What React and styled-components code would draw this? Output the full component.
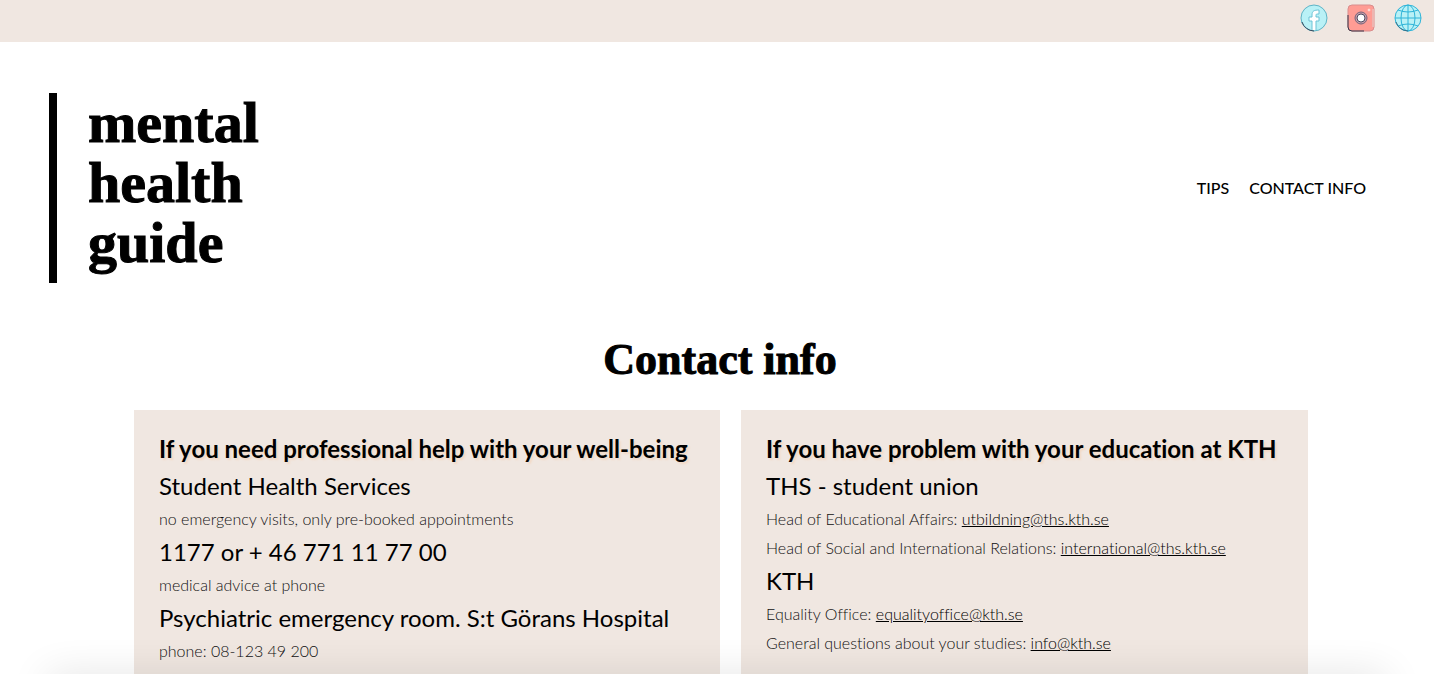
import React from 'react';
import styled, { createGlobalStyle } from 'styled-components';

const GlobalStyle = createGlobalStyle`
  *, *::before, *::after { box-sizing: border-box; }
  body {
    margin: 0;
    background: #fff;
    color: #000;
    font-family: Lato, "Liberation Sans", sans-serif;
    font-variant-ligatures: none;
  }
  h1, h2, h3, p { margin: 0; }
`;

const Page = styled.div`
  display: flex;
  flex-direction: column;
  min-height: 100vh;
`;

const SocialBar = styled.div`
  display: flex;
  justify-content: flex-end;
  gap: 19px;
  height: 42px;
  padding: 4px 12px;
  background: #f0e7e1;
`;

const SocialLink = styled.a`
  display: block;
  width: 28px;
  height: 28px;
  svg { display: block; width: 100%; height: 100%; }
`;

const Header = styled.header`
  display: flex;
  align-items: center;
  justify-content: space-between;
  padding: 51px 68px 0 49px;
`;

const Logo = styled.a`
  display: flex;
  flex-direction: column;
  padding: 0 0 10px 31px;
  border-left: 8px solid #000;
  color: #000;
  font: bold 58px/60px "Liberation Serif", serif;
  -webkit-text-stroke: 1px #000;
  text-decoration: none;
`;

const Nav = styled.nav`
  display: flex;
  gap: 20px;
`;

const NavLink = styled.a`
  color: #000;
  font-size: 16px;
  font-weight: 500;
  line-height: 24px;
  text-decoration: none;
`;

const Title = styled.h1`
  padding: 50px 0 24px 6px;
  font: bold 44px/53px "Liberation Serif", serif;
  -webkit-text-stroke: 1px #000;
  text-align: center;
`;

const Cards = styled.main`
  flex: 1;
  display: grid;
  grid-template-columns: 586fr 567fr;
  gap: 21px;
  padding: 0 126px 0 134px;
`;

const Card = styled.section`
  padding: 24px 25px 8px;
  background: #f0e7e1;
`;

const CardTitle = styled.h2`
  font-size: 24px;
  font-weight: 700;
  line-height: 29px;
  white-space: nowrap;
  text-shadow: 2px 2px 2px #f3d9c5;
`;

const Subject = styled.h3`
  padding-top: 8px;
  font-size: 24px;
  font-weight: 400;
  line-height: 29px;
`;

const Detail = styled.p`
  padding-top: 8px;
  color: #111;
  font-size: 16px;
  font-weight: 300;
  line-height: 21px;
`;

const MailLink = styled.a`
  color: #000;
`;

const BottomShade = styled.div`
  position: fixed;
  right: 48px;
  bottom: -24px;
  left: 48px;
  height: 20px;
  box-shadow: 0 0 40px rgba(0, 0, 0, 0.16);
  pointer-events: none;
`;

const FacebookIcon = () => (
  <svg viewBox="0 0 28 28" aria-hidden="true">
    <circle cx="14" cy="14" r="13" fill="#b9f1f6" stroke="#5fb4c6" />
    <path d="M2 18a13 13 0 0 0 12 9" fill="none" stroke="#38495c" />
    <path d="M12 26v-9H9v-4h3v-2c0-4 2-5 7-5v4c-3 0-3 0-3 2v1h3v4h-3v9" fill="#fff" stroke="#6cc3d6" />
  </svg>
);

const InstagramIcon = () => (
  <svg viewBox="0 0 28 28" aria-hidden="true">
    <rect x="1" y="1" width="26" height="26" rx="4" fill="#ff9c94" stroke="#d98d8d" />
    <path d="M26 5v18" stroke="#eeb5b0" strokeWidth="2" />
    <path d="M1 11v12q0 4 4 4h12" fill="none" stroke="#38394c" />
    <circle cx="14" cy="14" r="6" fill="#c79ba8" stroke="#77647a" />
    <circle cx="14" cy="14" r="4" fill="#fff" stroke="#4c4c61" />
    <circle cx="22" cy="6" r="1" fill="#fff" stroke="#ffd5d0" />
  </svg>
);

const GlobeIcon = () => (
  <svg viewBox="0 0 28 28" aria-hidden="true" fill="none" stroke="#2fb4d8">
    <circle cx="14" cy="14" r="13" fill="#b9f1f6" />
    <ellipse cx="14" cy="14" rx="7" ry="13" />
    <path d="M14 1v26M1 14h26M4 6q10 4 20 0M4 22q10-4 20 0" />
    <path d="M2 18a13 13 0 0 0 12 9" stroke="#386f88" />
  </svg>
);

const cards = [
  {
    title: 'If you need professional help with your well-being',
    entries: [
      { subject: 'Student Health Services', details: [{ text: 'no emergency visits, only pre-booked appointments' }] },
      { subject: '1177 or + 46 771 11 77 00', details: [{ text: 'medical advice at phone' }] },
      { subject: 'Psychiatric emergency room. S:t Görans Hospital', details: [{ text: 'phone: 08-123 49 200' }] },
    ],
  },
  {
    title: 'If you have problem with your education at KTH',
    entries: [
      {
        subject: 'THS - student union',
        details: [
          { text: 'Head of Educational Affairs: ', mail: 'utbildning@ths.kth.se' },
          { text: 'Head of Social and International Relations: ', mail: 'international@ths.kth.se' },
        ],
      },
      {
        subject: 'KTH',
        details: [
          { text: 'Equality Office: ', mail: 'equalityoffice@kth.se' },
          { text: 'General questions about your studies: ', mail: 'info@kth.se' },
        ],
      },
    ],
  },
];

export default function App() {
  return (
    <Page>
      <GlobalStyle />
      <SocialBar>
        <SocialLink href="#facebook" aria-label="Facebook"><FacebookIcon /></SocialLink>
        <SocialLink href="#instagram" aria-label="Instagram"><InstagramIcon /></SocialLink>
        <SocialLink href="#website" aria-label="Website"><GlobeIcon /></SocialLink>
      </SocialBar>
      <Header>
        <Logo href="#home">
          <span>mental</span>
          <span>health</span>
          <span>guide</span>
        </Logo>
        <Nav>
          <NavLink href="#tips">TIPS</NavLink>
          <NavLink href="#contact">CONTACT INFO</NavLink>
        </Nav>
      </Header>
      <Title id="contact">Contact info</Title>
      <Cards>
        {cards.map((card) => (
          <Card key={card.title}>
            <CardTitle>{card.title}</CardTitle>
            {card.entries.map((entry) => (
              <React.Fragment key={entry.subject}>
                <Subject>{entry.subject}</Subject>
                {entry.details.map(({ text, mail }) => (
                  <Detail key={text}>
                    {text}
                    {mail && <MailLink href={`mailto:${mail}`}>{mail}</MailLink>}
                  </Detail>
                ))}
              </React.Fragment>
            ))}
          </Card>
        ))}
      </Cards>
      <BottomShade />
    </Page>
  );
}
